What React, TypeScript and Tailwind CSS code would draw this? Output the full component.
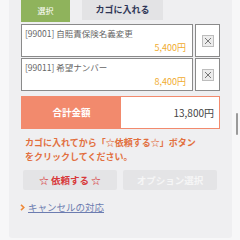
export default function App() {
  const items = [
    { code: "[99001]", name: "自賠責保険名義変更", price: "5,400円" },
    { code: "[99011]", name: "希望ナンバー", price: "8,400円" },
  ]

  return (
    <div
      className="relative w-[240px] h-[240px] overflow-hidden bg-[#f7f7f8]"
      style={{ fontFamily: '"Noto Sans CJK JP", "Noto Sans", sans-serif' }}
    >
      <div className="ml-[9px] mr-[8px] h-[238px] bg-[#efeff1] rounded-b-[3px] px-[12px]">
        {/* tabs */}
        <div className="flex items-start gap-[12px]">
          <div className="w-[49px] h-[22px] bg-[#8fb35c] flex items-center justify-center text-[8px] text-white">
            選択
          </div>
          <div className="w-[81px] h-[20px] bg-[#e3e3e5] flex items-center justify-center text-[9px] font-bold text-[#2f3656]">
            カゴに入れる
          </div>
        </div>

        {/* cart items */}
        <div className="mt-[2px] flex flex-col gap-[1px]">
          {items.map((it) => (
            <div key={it.code} className="flex gap-[2px] h-[33px]">
              <div className="w-[172px] bg-white border border-[#8a8a8a] pl-[3px] pr-[6px] flex flex-col leading-none">
                <div className="mt-[4px] text-[8.5px] text-[#666]">
                  {it.code} {it.name}
                </div>
                <div className="mt-auto mb-[4px] text-right text-[9px] text-[#f0ac30]">{it.price}</div>
              </div>
              <div className="w-[25px] bg-white border border-[#8a8a8a] flex items-center justify-center">
                <div className="w-[12px] h-[12px] bg-[#ececec] border border-[#bdbdbd] flex items-center justify-center">
                  <svg width="8" height="8" viewBox="0 0 8 8">
                    <path d="M1 1L7 7M7 1L1 7" stroke="#777" strokeWidth="1" />
                  </svg>
                </div>
              </div>
            </div>
          ))}
        </div>

        {/* total */}
        <div className="mt-[5px] flex h-[33px] bg-[#f28a6d] border border-[#f28a6d]">
          <div className="w-[99px] flex items-center justify-center text-[9.5px] text-white font-bold">
            合計金額
          </div>
          <div className="flex-1 bg-white flex items-center justify-end pr-[5px] text-[10px] text-[#444]">
            13,800円
          </div>
        </div>

        {/* note */}
        <div className="mt-[7px] pl-[4px] text-[9px] leading-[14px] font-bold text-[#e2703f]">
          <div>カゴに入れてから「☆依頼する☆」ボタン</div>
          <div>をクリックしてください。</div>
        </div>

        {/* buttons */}
        <div className="mt-[6px] flex gap-[6px] px-[2px]">
          <div className="w-[94px] h-[20px] rounded-[2px] bg-[#e4e4e6] flex items-center justify-center text-[9.5px] font-bold text-[#d8383a]">
            ☆ 依頼する ☆
          </div>
          <div className="w-[94px] h-[20px] rounded-[2px] bg-[#e4e4e6] flex items-center justify-center text-[9.5px] font-bold text-[#f6f6f6]">
            オプション選択
          </div>
        </div>

        {/* link */}
        <div className="mt-[13px] flex items-center gap-[3px] -ml-[1px]">
          <svg width="5" height="7" viewBox="0 0 5 7">
            <path d="M1 0.8L3.8 3.5L1 6.2" stroke="#ee8a3a" strokeWidth="1.6" fill="none" />
          </svg>
          <span className="text-[9.5px] text-[#6c7cb0] underline leading-none">キャンセルの対応</span>
        </div>
      </div>

      {/* scroll indicator */}
      <div className="absolute left-[236px] top-[113px] w-[2px] h-[22px] bg-[#9a9a9a] rounded-full" />
    </div>
  )
}
